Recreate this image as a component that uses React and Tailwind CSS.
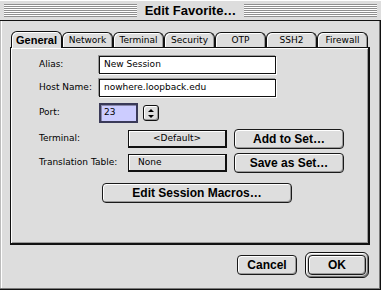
import React from "react";

const tabs = ["General", "Network", "Terminal", "Security", "OTP", "SSH2", "Firewall"];

const geneva = { fontFamily: '"DejaVu Sans", Verdana, sans-serif' };
const charcoal = { fontFamily: '"Liberation Sans", Arial, sans-serif' };

const Stripes = () => (
  <div className="flex-1 h-[13px] bg-[repeating-linear-gradient(to_bottom,#8f8f8f_0px,#8f8f8f_1px,#ffffff_1px,#ffffff_2px)]" />
);

const Button = ({ children, className = "" }) => (
  <div
    className={`h-[20px] flex items-center justify-center rounded-[4px] border border-[#1a1a1a] bg-[#dedede] shadow-[inset_1px_1px_0_#fff,inset_-1px_-1px_0_#9a9a9a] text-[12px] font-bold text-black ${className}`}
    style={charcoal}
  >
    {children}
  </div>
);

const Field = ({ children }) => (
  <div className="w-[177px] h-[18px] bg-white border border-[#111] shadow-[-1px_-1px_0_#999,1px_1px_0_#fff] flex items-center pl-[4px] text-[9px]" style={geneva}>
    {children}
  </div>
);

const Box = ({ children, center }) => (
  <div
    className={`w-[99px] h-[18px] border border-[#111] border-r-2 border-b-2 bg-[#dedede] shadow-[inset_1px_1px_0_#fff] flex items-center text-[9px] ${center ? "justify-center" : "pl-[9px]"}`}
    style={geneva}
  >
    {children}
  </div>
);

export default function App() {
  return (
    <div className="w-[381px] h-[290px] bg-[#dddddd] flex flex-col shadow-[inset_-1px_-1px_0_#111,inset_-2px_-2px_0_#7a7a7a,inset_1px_0_0_#bbb,inset_2px_0_0_#fff]">
      {/* Title bar */}
      <div className="h-[21px] border-b border-[#111] flex items-center px-[4px] bg-[#dddddd] shadow-[inset_0_1px_0_#fff]">
        <Stripes />
        <span className="px-[8px] text-[13px] font-bold text-black leading-none" style={charcoal}>
          Edit Favorite…
        </span>
        <Stripes />
      </div>

      {/* Body */}
      <div className="pl-[10px] pt-[10px] flex flex-col">
        <div className="flex items-end ml-[1px] h-[16px]">
          {tabs.map((t, i) =>
            i === 0 ? (
              <div
                key={t}
                className="relative z-10 w-[51px] h-[17px] -mb-px rounded-t-[6px] border border-b-0 border-[#111] bg-[#dddddd] shadow-[inset_1px_1px_0_#fff] flex items-center justify-center text-[11px] font-bold"
                style={charcoal}
              >
                {t}
              </div>
            ) : (
              <div
                key={t}
                className="w-[51px] h-[15px] rounded-t-[6px] border border-b-0 border-[#111] bg-[#dddddd] shadow-[inset_1px_1px_0_#fff,inset_-1px_0_0_#999] flex items-center justify-center text-[9px] pt-[1px]"
                style={geneva}
              >
                {t}
              </div>
            )
          )}
        </div>

        <div className="w-[360px] h-[198px] border border-[#111] border-r-2 border-b-2 shadow-[inset_1px_1px_0_#fff,inset_-1px_-1px_0_#999] flex flex-col">
          <div className="flex items-center mt-[8px] h-[18px] pl-[28px]">
            <span className="w-[60px] text-[9px]" style={geneva}>Alias:</span>
            <Field>New Session</Field>
          </div>
          <div className="flex items-center mt-[5px] h-[18px] pl-[28px]">
            <span className="w-[60px] text-[9px]" style={geneva}>Host Name:</span>
            <Field>nowhere.loopback.edu</Field>
          </div>
          <div className="flex items-center mt-[6px] h-[20px] pl-[28px]">
            <span className="w-[60px] text-[9px]" style={geneva}>Port:</span>
            <div className="w-[39px] h-[20px] border-2 border-[#3a3a58] bg-[#ccccff] flex items-center pl-[3px] text-[9px] shadow-[inset_1px_1px_0_#8888aa]" style={geneva}>
              23
            </div>
            <div className="ml-[5px] w-[16px] h-[16px] rounded-[3px] border border-[#111] bg-[#dedede] shadow-[inset_1px_1px_0_#fff,inset_-1px_-1px_0_#999] flex items-center justify-center">
              <svg width="6" height="9" viewBox="0 0 6 9">
                <path d="M3 0 L6 3 L0 3 Z" fill="#000" />
                <path d="M0 6 L6 6 L3 9 Z" fill="#000" />
              </svg>
            </div>
          </div>
          <div className="flex items-center mt-[6px] h-[20px] pl-[28px]">
            <span className="w-[89px] text-[9px]" style={geneva}>Terminal:</span>
            <Box center>&lt;Default&gt;</Box>
            <Button className="ml-[7px] w-[110px]">Add to Set…</Button>
          </div>
          <div className="flex items-center mt-[4px] h-[20px] pl-[28px]">
            <span className="w-[89px] text-[9px]" style={geneva}>Translation Table:</span>
            <Box>None</Box>
            <Button className="ml-[7px] w-[110px]">Save as Set…</Button>
          </div>
          <div className="flex mt-[10px] pl-[91px]">
            <Button className="w-[190px]">Edit Session Macros…</Button>
          </div>
        </div>

        <div className="flex items-center justify-end gap-[8px] mt-[7px] pr-[12px]">
          <Button className="w-[60px]">Cancel</Button>
          <div className="w-[64px] h-[26px] rounded-[6px] border border-[#111] bg-[#cfcfcf] shadow-[inset_1px_1px_0_#fff,inset_-1px_-1px_0_#777] p-[2px]">
            <Button className="w-full">OK</Button>
          </div>
        </div>
      </div>
    </div>
  );
}
